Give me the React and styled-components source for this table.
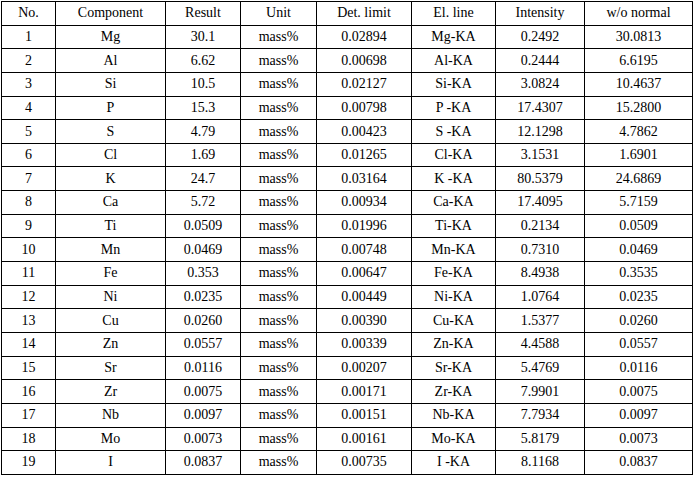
import React from "react";
import styled, { createGlobalStyle } from "styled-components";

const GlobalStyle = createGlobalStyle`
  html, body {
    margin: 0;
    padding: 0;
    background: #fff;
  }
`;

const Wrap = styled.div`
  padding: 1px 0 0 1px;
`;

const Table = styled.table`
  border-collapse: collapse;
  table-layout: fixed;
  width: 691px;
  font-family: "Liberation Serif", "Times New Roman", serif;
  font-size: 14px;
  color: #000;
  border: 1px solid #000;
`;

const Cell = styled.td`
  border: 1px solid #000;
  text-align: center;
  padding: 0;
  height: 22.65px;
  line-height: 16px;
  white-space: pre;
`;

const widths = [54, 110, 75, 76, 95, 84, 89, 108];
const header = ["No.", "Component", "Result", "Unit", "Det. limit", "El. line", "Intensity", "w/o normal"];

const rows = [
  ["Mg", "30.1", "0.02894", "Mg-KA", "0.2492", "30.0813"],
  ["Al", "6.62", "0.00698", "Al-KA", "0.2444", "6.6195"],
  ["Si", "10.5", "0.02127", "Si-KA", "3.0824", "10.4637"],
  ["P", "15.3", "0.00798", "P -KA", "17.4307", "15.2800"],
  ["S", "4.79", "0.00423", "S -KA", "12.1298", "4.7862"],
  ["Cl", "1.69", "0.01265", "Cl-KA", "3.1531", "1.6901"],
  ["K", "24.7", "0.03164", "K -KA", "80.5379", "24.6869"],
  ["Ca", "5.72", "0.00934", "Ca-KA", "17.4095", "5.7159"],
  ["Ti", "0.0509", "0.01996", "Ti-KA", "0.2134", "0.0509"],
  ["Mn", "0.0469", "0.00748", "Mn-KA", "0.7310", "0.0469"],
  ["Fe", "0.353", "0.00647", "Fe-KA", "8.4938", "0.3535"],
  ["Ni", "0.0235", "0.00449", "Ni-KA", "1.0764", "0.0235"],
  ["Cu", "0.0260", "0.00390", "Cu-KA", "1.5377", "0.0260"],
  ["Zn", "0.0557", "0.00339", "Zn-KA", "4.4588", "0.0557"],
  ["Sr", "0.0116", "0.00207", "Sr-KA", "5.4769", "0.0116"],
  ["Zr", "0.0075", "0.00171", "Zr-KA", "7.9901", "0.0075"],
  ["Nb", "0.0097", "0.00151", "Nb-KA", "7.7934", "0.0097"],
  ["Mo", "0.0073", "0.00161", "Mo-KA", "5.8179", "0.0073"],
  ["I", "0.0837", "0.00735", "I -KA", "8.1168", "0.0837"],
];

export default function App() {
  return (
    <Wrap>
      <GlobalStyle />
      <Table>
        <colgroup>
          {widths.map((w, i) => (
            <col key={i} style={{ width: w }} />
          ))}
        </colgroup>
        <tbody>
          <tr>
            {header.map((h) => (
              <Cell key={h}>{h}</Cell>
            ))}
          </tr>
          {rows.map((r, i) => (
            <tr key={i}>
              <Cell>{i + 1}</Cell>
              <Cell>{r[0]}</Cell>
              <Cell>{r[1]}</Cell>
              <Cell>mass%</Cell>
              <Cell>{r[2]}</Cell>
              <Cell>{r[3]}</Cell>
              <Cell>{r[4]}</Cell>
              <Cell>{r[5]}</Cell>
            </tr>
          ))}
        </tbody>
      </Table>
    </Wrap>
  );
}
